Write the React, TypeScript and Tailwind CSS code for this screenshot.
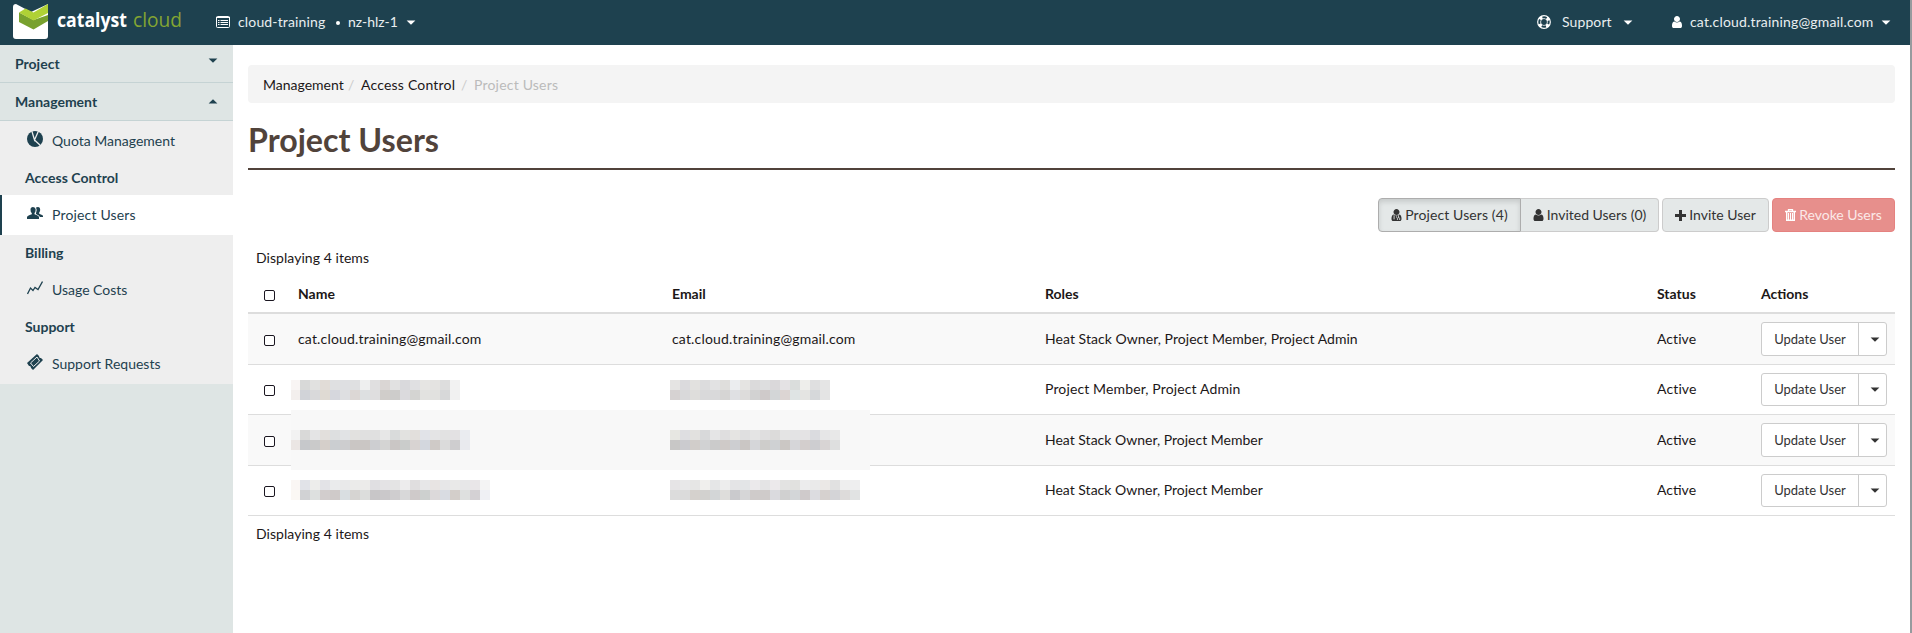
import type { ReactNode } from "react";

const rows = [
  { name: "cat.cloud.training@gmail.com", roles: "Heat Stack Owner, Project Member, Project Admin", row: "h-[51px] bg-[#f9f9f9]", text: "tracking-[0.05px]", btn: "h-[34px]" },
  { name: "", roles: "Project Member, Project Admin", row: "h-[50px]", text: "pb-0.5 tracking-[0.13px]", btn: "h-[33px]" },
  { name: "", roles: "Heat Stack Owner, Project Member", row: "h-[51px] bg-[#f9f9f9]", text: "", btn: "h-[34px]" },
  { name: "", roles: "Heat Stack Owner, Project Member", row: "h-[50px]", text: "pb-px", btn: "h-[33px]" },
];

type Mosaic = { x: number; y: number; first: number; colors: string[][] };
const m = (s: string) => s.split(" ");
const mosaics: Mosaic[] = [
  { x: 43, y: 105, first: 9, colors: [
    m("f9f5f4 d8d9d8 e1e1e0 e1dcd7 dfe0e1 dedfe2 dfe0e1 eeefef e0dfe0 dad6d4 e1e1e1 d9d9dc e0e0e2 e6e5e3 e4e3e1 dddddd f2f2f2"),
    m("f3efed d1d3d8 d9d9da dfdad3 d6d7dd dedfe1 dcd7d5 dde0e1 dfdedf d0cdca cdcccb dbdadd d4d4d2 e2e2e0 e1e1df d7d8d9 f1f1f1")] },
  { x: 422, y: 105, first: 10, colors: [
    m("e5e4e3 dbdadd e2e1df dcdcdd e2e2e3 dfdedc ebedef e5e4e2 dbdadb dddedf dad8da e4e2e4 dadddc eeeeeb dfdfe0 e5e5e5"),
    m("d6d2d2 d9d9da dedddb d9d9da d9d9da d6d5d4 dfe0e3 dddcdb d2d2d2 cfcaca d3d6d7 dcd5d3 dfe4e4 e4e4e2 d6d8da e4e4e4")] },
  { x: 43, y: 155, first: 9, colors: [
    m("f2f2f2 d9d9d8 e4e4e5 e2dfdc dddfe0 e1e3e5 e2e1df e0e0e0 e0e0e0 e7e7e7 d9dbdb e2e2e0 e2dfdc e1e3e8 e4e4e5 e2e2e2 e3e1e3 eaecf0"),
    m("ebe6e4 c6c8cb cacaca d5cfca cbced1 cdcdcf cac6c4 cac6c4 cdced1 d4d4d3 cac6c5 cacccb d8d3d2 d3d7de cfcac7 dbdbdb cecdcf e9eaee")] },
  { x: 422, y: 155, first: 10, colors: [
    m("e7e7e2 dedee1 e2e1df d8d9da e5e5e6 dfdedf e5e4e2 dfdfe0 e4e4e4 dfdedf dcdbda e4e4e4 e3e3e4 e4e3e4 dadbdf e6e6e7 e8e8e8"),
    m("c8c7c6 cbcbcf d1cdca d1d2d3 cbcbcb cfcac8 cdced1 cac6c4 d5d6d9 cecdcb cfd1d3 cbc7c4 d6d6d9 d3cecd cdcdd0 d8d4d4 dedfdf")] },
  { x: 43, y: 205, first: 9, colors: [
    m("faf6f4 e1e3e8 ededeb e3e3e7 eaebec e9e9ea ebebea ecebea e0dfe2 e4e3e5 e4e4e4 edeced e0dedf e7e7e8 e8e4e3 e7e7e8 e9e9e8 e7e7e8 e9e6e8 f4f4f4"),
    m("fbf8f4 d1d2d4 dde0df d2cdcd cfcac9 d9dee1 d6d4d2 dcdddc c8c6c8 cac8ca cfcdcf d8d8d9 cfcaca cdd0cf dcd9da d9dce2 d3ceca dee0df d4d1d4 eff0f4")] },
  { x: 422, y: 205, first: 10, colors: [
    m("e6e4e6 e8e8e9 e6e6e5 f0efed e5e6e7 ededed e4e4e6 e3e5e7 ebe9eb e4e4e5 ece9eb e3e3e2 e1e1df ececed eaeaea ebe8e6 e1e1e1 eeeeee eeeeef"),
    m("dcdcdc dbdbdb d5d1cd d2d1cf d3d6d7 dedddb cacacd d6d6d7 cfcbca cfcbca dadade d0d0d0 d3d6d8 cfcacb dcdce0 d6d1cf d4d4d7 dddbda e1e3e3")] },
];

function Caret({ up = false, className = "" }: { up?: boolean; className?: string }) {
  return (
    <svg width="8" height="5" viewBox="0 0 8 5" className={"shrink-0 overflow-visible " + className} fill="currentColor">
      <path d={up ? "M-.4 4.600L4 .2L8.400 4.600Z" : "M-.4 .4H8.400L4 4.800Z"} />
    </svg>
  );
}

function Logo() {
  return (
    <svg width="170" height="45" viewBox="0 0 170 45" className="shrink-0">
      <path d="M0 7Q0 4 3 4L18 12L35 4V36Q35 39 32 39H3Q0 39 0 36Z" fill="#fff" />
      <path d="M6 12.500L20.500 20L35 15V21L20.500 29.500L6 22Z" fill="#78a12e" />
      <path d="M6 12.500L12.500 8.500L20.500 12.500L35 4V13L20.500 20.500Z" fill="#afd136" />
      <text x="44" y="27" fontFamily="Open Sans" fontWeight="700" fontSize="19.500" fill="#fff" textLength="70" lengthAdjust="spacingAndGlyphs">catalyst</text>
      <text x="120" y="27" fontFamily="Open Sans" fontWeight="400" fontSize="20" fill="#84a532" textLength="49" lengthAdjust="spacingAndGlyphs">cloud</text>
    </svg>
  );
}

function UserIcon({ className = "", medic = false }: { className?: string; medic?: boolean }) {
  return (
    <svg viewBox="0 0 1280 1536" className={"shrink-0 " + className} fill="currentColor">
      <path d="M1280 1271q0 109-62.500 187t-150.500 78h-854q-88 0-150.500-78t-62.500-187q0-85 8.500-160.500t31.500-152 58.500-131 94-89 134.500-34.500q131 128 313 128t313-128q76 0 134.500 34.500t94 89 58.500 131 31.500 152 8.500 160.500zm-256-887q0 159-112.500 271.500t-271.500 112.500-271.500-112.500-112.500-271.500 112.500-271.500 271.500-112.500 271.500 112.500 112.500 271.500z" />
      {medic && <path d="M330 800V1180M250 1250h160M640 950V1100M900 800V1080M760 1400V1200Q760 1100 900 1100T1040 1200V1400" fill="none" stroke="#e4e8e8" strokeWidth="110" />}
    </svg>
  );
}

function SideItem({ icon, label, active = false }: { icon: ReactNode; label: string; active?: boolean }) {
  return (
    <div className={"flex h-10 items-center " + (active ? "border-l-2 border-[#1e414f] bg-white pl-[25px] tracking-[0.17px]" : "pl-[27px]")}>
      <svg width="16" height="16" viewBox="0 0 16 16" fill="currentColor" className="mr-[9px] -mt-1">{icon}</svg>
      <span>{label}</span>
    </div>
  );
}

function Checkbox({ className = "mt-[2px]" }: { className?: string }) {
  return <div className={"ml-4 size-[11px] rounded-[2px] border border-[#1a1620] bg-white " + className} />;
}

const grid = "grid grid-cols-[50px_374px_373px_612px_104px_1fr] items-center";

export default function App() {
  return (
    <div className="flex h-[633px] w-[1912px] overflow-hidden bg-white font-['Lato',sans-serif] text-sm leading-5 text-[#1c1718]">
      <div className="flex w-[1910px] flex-col">
        <header className="flex h-[45px] items-center bg-[#1e414f] pb-px pl-[13px] text-[#e9eef0]">
          <Logo />
          <svg width="14" height="12" viewBox="0 0 14 12" fill="none" stroke="#fff" className="ml-[33px] shrink-0">
            <rect x=".5" y=".5" width="13" height="11" rx="1" /><path d="M0 1.500H14M2 4.500H3.500M4.500 4.500H12M2 6.500H3.500M4.500 6.500H12M2 8.500H3.500M4.500 8.500H12" />
          </svg>
          <span className="ml-2 w-[90px] tracking-[0.15px] whitespace-nowrap">cloud-training</span>
          <span className="mt-px mr-2 ml-2 size-1 rounded-full bg-white" />
          <span className="w-[50px] whitespace-nowrap">nz-hlz-1</span>
          <Caret className="ml-[9px] text-white" />
          <div className="ml-auto flex items-center pr-[20px]">
            <svg width="14" height="14" viewBox="0 0 14 14" fill="none" className="shrink-0">
              <circle cx="7" cy="7" r="4.900" stroke="#fff" strokeWidth="4" />
              <circle cx="7" cy="7" r="4.700" stroke="#1e414f" strokeWidth="2" strokeDasharray="4.400 2.983" strokeDashoffset="2.200" />
            </svg>
            <span className="ml-[11px] w-[50px] tracking-[0.1px]">Support</span>
            <Caret className="ml-3 text-white" />
            <UserIcon className="ml-[40px] h-3 w-[10px] text-white" />
            <span className="ml-2 w-[183px] tracking-[0.17px]">cat.cloud.training@gmail.com</span>
            <Caret className="ml-[9px] text-white" />
          </div>
        </header>
        <div className="flex flex-1">
          <aside className="w-[233px] bg-[#dee5e4] text-[#1e414f]">
            <div className="flex h-[38px] items-center justify-between border-b border-[#c5d3d4] pr-4 pl-[15px] font-bold">
              Project<Caret className="-mt-1.5" />
            </div>
            <div className="flex h-[38px] items-center justify-between border-b border-[#c5d3d4] pr-4 pl-[15px] font-bold">
              Management<Caret up className="-mt-px" />
            </div>
            <nav className="h-[263px] bg-[#eee]">
              <SideItem label="Quota Management" icon={<g><circle cx="8" cy="8" r="8" /><path d="M4.500 -1L7.500 9L11.500 0M7.500 9L14 15" fill="none" stroke="#eee" strokeWidth="1.300" /></g>} />
              <div className="flex h-[34px] items-center pl-[25px] font-bold tracking-[0.05px]">Access Control</div>
              <SideItem active label="Project Users" icon={<path d="M0 14V12Q0 11 4.800 9.300V8Q3.400 6.800 3.500 4.500Q3.500 2 6 2T8.700 4.500Q8.700 6.800 7.500 8V9.300Q12 11 12 12V14ZM9 2.600Q10 1.900 11.200 2Q13.300 2.200 13.200 4.700Q13.200 6.500 12.200 7.500V8.700Q16 10.200 16 11V12H13Q12.500 10.600 9 9V8.200Q10.600 5.500 9 2.600Z" />} />
              <div className="flex h-[35px] items-center pl-[25px] font-bold">Billing</div>
              <SideItem label="Usage Costs" icon={<path d="M.5 14L3.500 8L6 10.500L8 7.500L11 9.500L15.500 1.500" fill="none" stroke="currentColor" strokeWidth="1.300" />} />
              <div className="flex h-[34px] items-center pl-[25px] font-bold">Support</div>
              <SideItem label="Support Requests" icon={<g><path d="M0 9L10 0L12 2Q12 4.500 14 4L16 6L6 16L4 14Q4 11.500 2 12Z" /><path d="M3.500 9L10 3L12.500 7L6.500 12.500Z" fill="none" stroke="#eee" strokeWidth="1" /></g>} />
            </nav>
          </aside>
          <main className="flex-1 pt-5 pr-[15px] pl-[15px]">
            <div className="flex h-[38px] items-center rounded bg-[#f4f4f4] pt-[2px] pl-[15px]">
              <span className="w-[80px]">Management</span>
              <span className="mr-[5px] ml-[5px] w-[8px] text-[#ccc]">/</span>
              <span className="w-[95px] tracking-[0.2px]">Access Control</span>
              <span className="mr-[5px] ml-[5px] w-[8px] text-[#ccc]">/</span>
              <span className="tracking-[0.2px] text-[#bbb]">Project Users</span>
            </div>
            <h1 className="flex h-[67px] items-start border-b-2 border-[#51433b] pt-[17px] text-[32.2px] leading-[40px] font-bold text-[#51433b]">Project Users</h1>
            <div className="mt-7 flex h-[34px] justify-end text-[#333]">
              <div className="flex w-[143px] items-center justify-center gap-[3px] rounded-l border border-[#adadad] bg-[#e4e8e8] tracking-[0.1px] shadow-[inset_0_3px_5px_rgba(0,0,0,0.125)]"><UserIcon medic className="h-3 w-[11px]" />Project Users (4)</div>
              <div className="flex w-[138px] items-center justify-center gap-[3px] rounded-r border border-l-0 border-[#ccc] bg-[#e4e8e8]"><UserIcon className="h-3 w-[11px]" />Invited Users (0)</div>
              <div className="ml-[3px] flex w-[107px] items-center justify-center gap-[3px] rounded border border-[#ccc] bg-[#e4e8e8]">
                <svg width="11" height="11" viewBox="0 0 11 11" fill="currentColor" className="shrink-0"><path d="M4 0H7V4H11V7H7V11H4V7H0V4H4Z" /></svg>Invite User
              </div>
              <div className="ml-[3px] flex w-[123px] items-center justify-center gap-[3px] rounded border border-[#e58280] bg-[#e78f8c] text-[#fbe9e8]">
                <svg width="11" height="12" viewBox="0 0 11 12" fill="none" stroke="#fff" className="shrink-0"><path d="M0 2.500H11M3.500 2V.6H7.500V2" strokeWidth="1.300" /><path d="M1.700 3V11.300H9.300V3" strokeWidth="1.400" /><path d="M3.500 4V11M5.500 4V11M7.500 4V11" strokeWidth="1.100" /></svg>Revoke Users
              </div>
            </div>
            <div className="flex h-[43px] items-end pb-[7px] pl-2 tracking-[0.05px]">Displaying 4 items</div>
            <div className="relative">
              <div className={grid + " h-[39px] border-b-2 border-[#ddd] font-bold"}>
                <Checkbox className="mt-1" /><span>Name</span><span>Email</span><span>Roles</span><span>Status</span><span>Actions</span>
              </div>
              {rows.map((r, i) => (
                <div key={i} className={grid + " border-b border-[#ddd] " + r.row}>
                  <Checkbox className={i % 2 ? "mt-px" : "mt-[2px]"} />
                  <span className="tracking-[0.17px]">{r.name}</span>
                  <span className="tracking-[0.17px]">{r.name}</span>
                  <span className={r.text}>{r.roles}</span>
                  <span className={r.text}>Active</span>
                  <div className={"flex w-[126px] rounded-[3px] border border-[#ccc] bg-white text-[13px] text-[#333] " + r.btn}>
                    <div className="flex w-[97px] items-center justify-center border-r border-[#ccc] pb-px">Update User</div>
                    <div className="flex flex-1 items-center justify-center pl-[5px]"><Caret /></div>
                  </div>
                </div>
              ))}
              <div className="absolute top-[135px] left-[43px] h-[60px] w-[579px] bg-[#f8f8f8]" />
              {mosaics.map((b, i) => (
                <div key={i} className="absolute" style={{ left: b.x, top: b.y }}>
                  {b.colors.map((line, j) => (
                    <div key={j} className="flex h-[10px]">
                      {line.map((c, k) => <div key={k} style={{ width: k ? 10 : b.first, background: "#" + c }} />)}
                    </div>
                  ))}
                </div>
              ))}
            </div>
            <div className="mt-[8px] pl-2 tracking-[0.05px]">Displaying 4 items</div>
          </main>
        </div>
      </div>
      <div className="w-[2px] bg-[#969b9e]" />
    </div>
  );
}
